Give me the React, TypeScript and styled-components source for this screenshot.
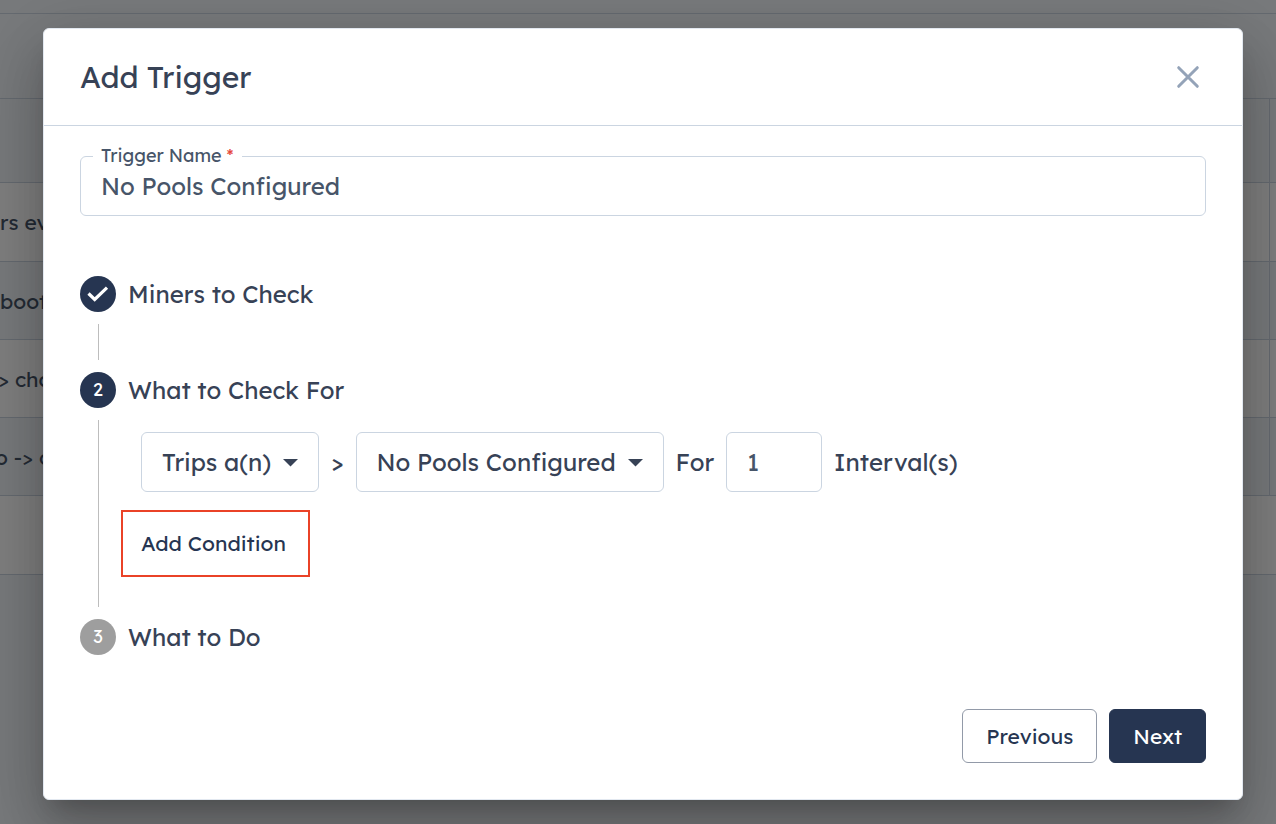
import React, { useState } from "react";
import styled, { createGlobalStyle } from "styled-components";

const color = {
  navy: "#263551",
  text: "#374256",
  field: "#475569",
  border: "#cbd5e1",
  muted: "#94a3b8",
  disabled: "#9e9e9e",
  line: "#bdbdbd",
  error: "#e5483d",
  highlight: "#ea4227",
};

const GlobalStyle = createGlobalStyle`
  *, *::before, *::after { box-sizing: border-box; }
  body {
    margin: 0;
    background: #f1f5f9;
    color: ${color.text};
    font-family: Lexend, Inter, "Liberation Sans", sans-serif;
    font-size: 24px;
    line-height: 36px;
  }
  button, input, select { font: inherit; color: inherit; margin: 0; }
`;

const Screen = styled.div`
  display: grid;
  min-height: 100vh;
  overflow: hidden;
`;

const Backdrop = styled.div`
  grid-area: 1 / 1;
  min-width: 0;
  overflow: hidden;
`;

const TopBar = styled.div`
  height: 14px;
  border-bottom: 1px solid ${color.border};
`;

const Toolbar = styled.div`
  height: 84px;
`;

const TriggerTable = styled.table`
  width: 100%;
  border-collapse: collapse;
  table-layout: fixed;
  color: ${color.field};
  font-size: 21px;
  line-height: 30px;
  border-bottom: 1px solid ${color.border};
`;

const ActionCol = styled.col`
  width: 7px;
`;

const HeadCell = styled.th`
  height: 84px;
  padding: 0;
  border-top: 1px solid ${color.border};
  border-left: 1px solid ${color.border};
  &:first-child { border-left: 0; }
`;

const Cell = styled.td<{ $scrolled?: number }>`
  height: 78px;
  padding: 0;
  text-indent: ${(p) => -(p.$scrolled ?? 0)}px;
  white-space: nowrap;
  border-top: 1px solid ${color.border};
  border-left: 1px solid ${color.border};
  &:first-child { border-left: 0; }
`;

const BodyRow = styled.tr<{ $shaded: boolean }>`
  background: ${(p) => (p.$shaded ? "#f1f5f9" : "#ffffff")};
  &:first-child ${Cell}, &:last-child ${Cell} { height: 79px; }
`;

const Overlay = styled.div`
  grid-area: 1 / 1;
  z-index: 1;
  display: flex;
  align-items: flex-start;
  min-width: 0;
  padding: 28px 33px 24px 43px;
  background: rgba(0, 0, 0, 0.5);
`;

const Dialog = styled.section`
  flex: 1;
  min-width: 0;
  background: #ffffff;
  border: 1px solid #e2e8f0;
  border-radius: 6px;
  box-shadow:
    0 16px 22px -10px rgba(0, 0, 0, 0.2),
    0 36px 57px 4px rgba(0, 0, 0, 0.14),
    0 14px 69px 12px rgba(0, 0, 0, 0.12);
`;

const DialogHeader = styled.header`
  display: flex;
  align-items: center;
  justify-content: space-between;
  height: 97px;
  padding: 0 36px;
  border-bottom: 1px solid ${color.border};
`;

const Title = styled.h1`
  margin: 0;
  font-size: 30px;
  font-weight: 400;
  line-height: 40px;
`;

const CloseButton = styled.button`
  display: flex;
  padding: 0;
  border: 0;
  background: none;
  color: ${color.muted};
  cursor: pointer;
`;

const DialogBody = styled.form`
  display: flex;
  flex-direction: column;
  padding: 30px 36px 36px;
`;

const Field = styled.div`
  position: relative;
  margin-bottom: 60px;
`;

const FieldLabel = styled.label`
  position: absolute;
  top: -12px;
  left: 13px;
  padding: 0 8px;
  background: #ffffff;
  color: ${color.field};
  font-size: 18px;
  line-height: 24px;
`;

const Required = styled.span`
  color: ${color.error};
`;

const TextInput = styled.input`
  display: block;
  width: 100%;
  height: 60px;
  padding: 0 20px;
  border: 1px solid ${color.border};
  border-radius: 6px;
  background: #ffffff;
  color: ${color.field};
  outline: none;
`;

const CountInput = styled(TextInput)`
  width: 96px;
`;

const Steps = styled.ol`
  display: flex;
  flex-direction: column;
  gap: 12px;
  margin: 0;
  padding: 0;
  list-style: none;
`;

const Step = styled.li`
  display: flex;
  flex-direction: column;
  gap: 12px;
`;

const StepHeading = styled.div`
  display: flex;
  align-items: center;
  gap: 12px;
  height: 36px;
`;

const StepBadge = styled.span<{ $pending?: boolean }>`
  display: flex;
  align-items: center;
  justify-content: center;
  width: 36px;
  height: 36px;
  border-radius: 50%;
  background: ${(p) => (p.$pending ? color.disabled : color.navy)};
  color: #ffffff;
  font-size: 18px;
  line-height: 24px;
`;

const StepContent = styled.div`
  min-height: 36px;
  margin-left: 18px;
  padding-left: 22px;
  border-left: 1px solid ${color.line};
`;

const ConditionRow = styled.div`
  display: flex;
  align-items: center;
  flex-wrap: wrap;
  gap: 12px;
  padding: 12px 0 18px 20px;
`;

const SelectBox = styled.span`
  position: relative;
  display: inline-flex;
  align-items: center;
`;

const Select = styled.select<{ $width: number }>`
  appearance: none;
  width: ${(p) => p.$width}px;
  height: 60px;
  padding: 0 46px 0 20px;
  border: 1px solid ${color.border};
  border-radius: 6px;
  background: #ffffff;
  outline: none;
`;

const Caret = styled.svg`
  position: absolute;
  right: 20px;
  pointer-events: none;
`;

const HighlightFrame = styled.div`
  display: inline-flex;
  align-items: center;
  height: 67px;
  margin-bottom: 30px;
  padding: 0 22px 2px 18px;
  border: 2px solid ${color.highlight};
  vertical-align: top;
`;

const LinkButton = styled.button`
  padding: 0;
  border: 0;
  background: none;
  color: ${color.navy};
  font-size: 21px;
  line-height: 30px;
  cursor: pointer;
`;

const Actions = styled.div`
  display: flex;
  justify-content: flex-end;
  gap: 12px;
  margin-top: 54px;
`;

const ActionButton = styled.button<{ $primary?: boolean }>`
  height: 54px;
  padding: 0 23px;
  border: 1px solid ${(p) => (p.$primary ? color.navy : "#929aa8")};
  border-radius: 6px;
  background: ${(p) => (p.$primary ? color.navy : "#ffffff")};
  color: ${(p) => (p.$primary ? "#ffffff" : color.navy)};
  font-size: 21px;
  line-height: 30px;
  cursor: pointer;
`;

const rows = [
  { text: "rs ev", scrolled: 0 },
  { text: "boot", scrolled: 0 },
  { text: "> cha", scrolled: 2 },
  { text: "o -> c", scrolled: 5 },
];

function Dropdown({ label, value, width }: { label: string; value: string; width: number }) {
  return (
    <SelectBox>
      <Select aria-label={label} $width={width} defaultValue={value}>
        <option>{value}</option>
      </Select>
      <Caret width="16" height="10" viewBox="0 0 16 10" aria-hidden="true">
        <path d="M0 2h15L7.500 9.500z" fill={color.text} />
      </Caret>
    </SelectBox>
  );
}

export default function App() {
  const [name, setName] = useState("No Pools Configured");
  const [count, setCount] = useState("1");

  return (
    <>
      <GlobalStyle />
      <Screen>
        <Backdrop aria-hidden="true">
          <TopBar />
          <Toolbar />
          <TriggerTable>
            <colgroup>
              <col />
              <ActionCol />
            </colgroup>
            <thead>
              <tr>
                <HeadCell />
                <HeadCell />
              </tr>
            </thead>
            <tbody>
              {rows.map((row, i) => (
                <BodyRow key={row.text} $shaded={i % 2 === 1}>
                  <Cell $scrolled={row.scrolled}>{row.text}</Cell>
                  <Cell />
                </BodyRow>
              ))}
              <BodyRow $shaded={false}>
                <Cell colSpan={2} />
              </BodyRow>
            </tbody>
          </TriggerTable>
        </Backdrop>

        <Overlay>
          <Dialog role="dialog" aria-modal="true" aria-labelledby="dialog-title">
            <DialogHeader>
              <Title id="dialog-title">Add Trigger</Title>
              <CloseButton type="button" aria-label="Close">
                <svg width="36" height="36" viewBox="0 0 36 36" fill="none" aria-hidden="true">
                  <path
                    d="M8.700 8.700l18.600 18.600M27.300 8.700l-18.600 18.600"
                    stroke="currentColor"
                    strokeWidth="3"
                    strokeLinecap="round"
                  />
                </svg>
              </CloseButton>
            </DialogHeader>

            <DialogBody onSubmit={(e) => e.preventDefault()}>
              <Field>
                <TextInput
                  id="trigger-name"
                  required
                  value={name}
                  onChange={(e) => setName(e.target.value)}
                />
                <FieldLabel htmlFor="trigger-name">
                  Trigger Name <Required>*</Required>
                </FieldLabel>
              </Field>

              <Steps>
                <Step>
                  <StepHeading>
                    <StepBadge>
                      <svg width="22" height="16" viewBox="0 0 22 16" fill="none" aria-hidden="true">
                        <path d="M1.500 7.500l6.200 6L20 1.700" stroke="currentColor" strokeWidth="3.200" />
                      </svg>
                    </StepBadge>
                    Miners to Check
                  </StepHeading>
                  <StepContent />
                </Step>

                <Step>
                  <StepHeading>
                    <StepBadge>2</StepBadge>
                    What to Check For
                  </StepHeading>
                  <StepContent>
                    <ConditionRow>
                      <Dropdown label="Condition type" value="Trips a(n)" width={178} />
                      <span>&gt;</span>
                      <Dropdown label="Condition" value="No Pools Configured" width={308} />
                      <label htmlFor="interval-count">For</label>
                      <CountInput
                        id="interval-count"
                        inputMode="numeric"
                        value={count}
                        onChange={(e) => setCount(e.target.value)}
                      />
                      <span>Interval(s)</span>
                    </ConditionRow>
                    <HighlightFrame>
                      <LinkButton type="button">Add Condition</LinkButton>
                    </HighlightFrame>
                  </StepContent>
                </Step>

                <Step>
                  <StepHeading>
                    <StepBadge $pending>3</StepBadge>
                    What to Do
                  </StepHeading>
                </Step>
              </Steps>

              <Actions>
                <ActionButton type="button">Previous</ActionButton>
                <ActionButton type="submit" $primary>
                  Next
                </ActionButton>
              </Actions>
            </DialogBody>
          </Dialog>
        </Overlay>
      </Screen>
    </>
  );
}
